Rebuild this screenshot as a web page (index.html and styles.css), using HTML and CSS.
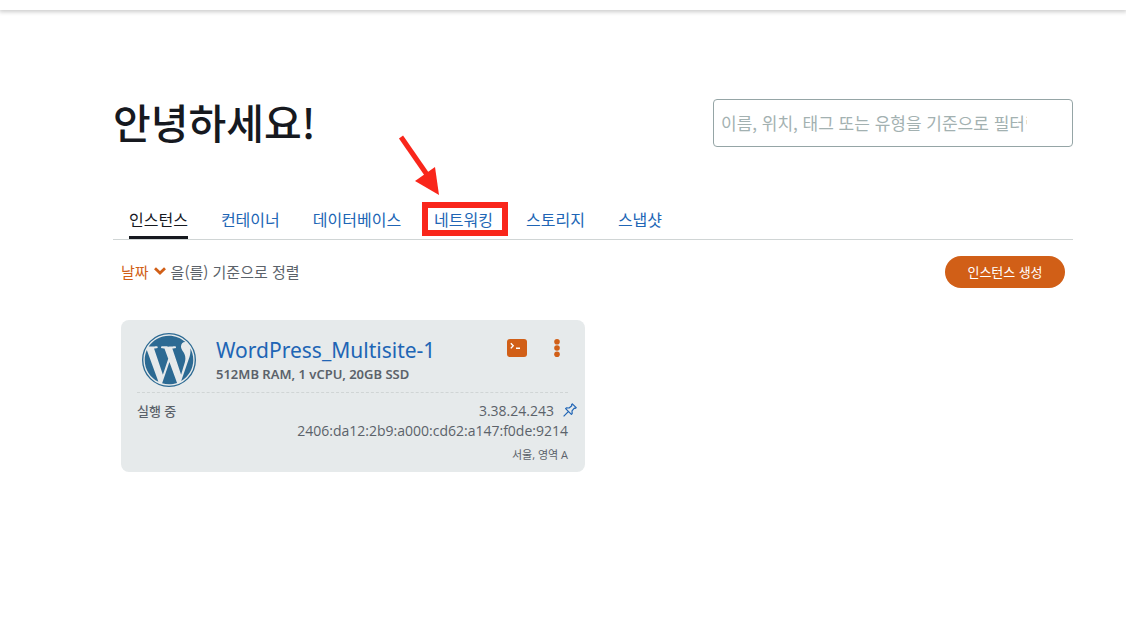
FILE: index.html
```html
<!DOCTYPE html>
<html lang="ko">
<head>
    <meta charset="UTF-8">
    <meta name="viewport" content="width=device-width, initial-scale=1.0">
    <title>Lightsail</title>
    <link rel="stylesheet" href="styles.css">
</head>
<body>
    <header class="topbar"></header>
    <main class="home">
        <div class="welcome">
            <h1>안녕하세요!</h1>
            <input type="text" class="filter" aria-label="필터" placeholder="이름, 위치, 태그 또는 유형을 기준으로 필터링">
        </div>

        <nav class="tabs">
            <a href="#" class="active">인스턴스</a>
            <a href="#">컨테이너</a>
            <a href="#">데이터베이스</a>
            <a href="#" class="marked">네트워킹
                <svg class="arrow" width="44" height="60" viewBox="0 0 44 60" aria-hidden="true">
                    <path d="M3 2L30 41" stroke="#f9261b" stroke-width="5"/>
                    <path d="M17 46L37 32L41 60Z" fill="#f9261b"/>
                </svg>
            </a>
            <a href="#">스토리지</a>
            <a href="#">스냅샷</a>
        </nav>

        <div class="toolbar">
            <div class="sort">
                <button type="button" class="sort-button">날짜
                    <svg width="12" height="8" viewBox="0 0 12 8" aria-hidden="true"><path d="M1 1.3L6 6L11 1.3" fill="none" stroke="#d15f17" stroke-width="2.8"/></svg>
                </button>
                <span>을(를) 기준으로 정렬</span>
            </div>
            <button type="button" class="create">인스턴스 생성</button>
        </div>

        <div class="cards">
            <article class="card">
                <div class="card-head">
                    <svg class="logo" width="54" height="54" viewBox="0 0 24 24" role="img" aria-label="WordPress">
                        <circle cx="12" cy="12" r="11.7" fill="#e6eaeb" stroke="#2c6a93" stroke-width=".6"/>
                        <path fill="#2c6a93" d="M21.469 6.825c.84 1.537 1.318 3.3 1.318 5.175 0 3.979-2.156 7.456-5.363 9.325l3.295-9.527c.615-1.54.82-2.771.82-3.864 0-.405-.026-.78-.07-1.11m-7.981.105c.647-.03 1.232-.105 1.232-.105.582-.075.514-.93-.067-.899 0 0-1.755.135-2.88.135-1.064 0-2.85-.15-2.85-.15-.585-.03-.661.855-.075.885 0 0 .54.061 1.125.09l1.68 4.605-2.37 7.08L5.354 6.9c.649-.03 1.234-.1 1.234-.1.585-.075.516-.93-.065-.896 0 0-1.746.138-2.874.138-.2 0-.438-.008-.69-.015C4.911 3.15 8.235 1.215 12 1.215c2.809 0 5.365 1.072 7.286 2.833-.046-.003-.091-.009-.141-.009-1.06 0-1.812.923-1.812 1.914 0 .89.513 1.643 1.06 2.531.411.72.89 1.643.89 2.977 0 .915-.354 1.994-.821 3.479l-1.075 3.585-3.9-11.61zM12 22.784c-1.059 0-2.081-.153-3.048-.437l3.237-9.406 3.315 9.087c.024.053.05.101.078.149-1.12.393-2.325.609-3.582.609M1.211 12c0-1.564.336-3.05.935-4.39L7.29 21.709C3.694 19.96 1.212 16.271 1.211 12"/>
                    </svg>
                    <div class="title">
                        <a href="#">WordPress_Multisite-1</a>
                        <p>512MB RAM, 1 vCPU, 20GB SSD</p>
                    </div>
                    <div class="actions">
                        <button type="button" aria-label="연결">
                            <svg width="20" height="18" viewBox="0 0 20 18"><rect width="20" height="18" rx="3" fill="#d15f17"/><path d="M3.8 4.2L6.2 6.8L3.8 9.4M9 9.3H13" fill="none" stroke="#fff" stroke-width="1.4"/></svg>
                        </button>
                        <button type="button" aria-label="메뉴">
                            <svg width="6" height="18" viewBox="0 0 6 18" fill="#d15f17"><circle cx="3" cy="2.8" r="2.8"/><circle cx="3" cy="9" r="2.8"/><circle cx="3" cy="15.2" r="2.8"/></svg>
                        </button>
                    </div>
                </div>
                <div class="card-body">
                    <span class="status">실행 중</span>
                    <div class="address">
                        <p>3.38.24.243
                            <svg class="pin" width="14" height="14" viewBox="0 0 14 14" aria-hidden="true"><path d="M9.3 .8L13.2 4.7L12.3 5.4L11.3 5.2L9 7.9L9.2 10.6L8.4 11.4L2.6 5.6L3.4 4.8L6.1 5L8.8 2.7L8.6 1.6ZM5.3 8.7L.6 13.4" fill="none" stroke="#2065b5" stroke-width="1.2" stroke-linejoin="round"/></svg>
                        </p>
                        <p>2406:da12:2b9:a000:cd62:a147:f0de:9214</p>
                        <p class="region">서울, 영역 A</p>
                    </div>
                </div>
            </article>
        </div>
    </main>
</body>
</html>
```
FILE: styles.css
```css
* {
    box-sizing: border-box;
}
body {
    margin: 0;
    background: #fff;
    color: #5b626a;
    font-family: "Open Sans", "Noto Sans CJK KR", sans-serif;
    font-size: 15px;
}
h1, p {
    margin: 0;
    font-weight: normal;
}
a {
    color: #2065b5;
    text-decoration: none;
}
button {
    padding: 0;
    border: none;
    background: none;
    font-family: inherit;
    cursor: pointer;
}
svg {
    display: block;
}
.topbar {
    height: 10px;
    box-shadow: 0 1px 4px 1px rgba(0,0,0,0.2);
}
.home {
    padding: 84px 53px 40px 113px;
}
.welcome {
    display: flex;
    justify-content: space-between;
    align-items: center;
    height: 58px;
}
h1 {
    padding-bottom: 4px;
    color: #16191f;
    font-family: "Noto Sans CJK KR", sans-serif;
    font-size: 41px;
    font-weight: 500;
    line-height: 58px;
}
.filter {
    width: 360px;
    height: 48px;
    padding: 0 45px 2px 7px;
    border: 1px solid #95a5a6;
    border-radius: 4px;
    font-family: "Noto Sans CJK KR", sans-serif;
    font-size: 17px;
}
.filter::placeholder {
    color: #a3b1b1;
    opacity: 1;
}
.tabs {
    display: flex;
    gap: 33px;
    margin-top: 50px;
    padding-left: 16px;
    border-bottom: 1px solid #d0d5d5;
}
.tabs a {
    position: relative;
    height: 37px;
    font-family: "Noto Sans CJK KR", sans-serif;
    font-size: 16px;
    line-height: 34px;
}
.tabs .active {
    color: #16191f;
    border-bottom: 3px solid #16191f;
}
/* red highlight box around the tab */
.marked::before {
    content: "";
    position: absolute;
    inset: 0 -15px 3px -12px;
    border: 6px solid #f9261b;
}
.arrow {
    position: absolute;
    right: 51px;
    bottom: 44px;
}
.toolbar {
    display: flex;
    justify-content: space-between;
    align-items: center;
    margin-top: 16px;
    padding: 0 8px;
}
.sort, .sort-button {
    display: flex;
    align-items: center;
    gap: 5px;
    font-family: "Noto Sans CJK KR", sans-serif;
    font-size: 15px;
}
.sort {
    padding-bottom: 2px;
}
.sort-button {
    color: #d15f17;
}
.create {
    width: 120px;
    height: 32px;
    padding-bottom: 2px;
    border-radius: 16px;
    background: #d15f17;
    color: #fff;
    font-size: 13px;
}
.cards {
    display: grid;
    grid-template-columns: 1fr 1fr;
    gap: 16px;
    margin-top: 32px;
    padding: 0 8px;
}
.card {
    height: 152px;
    padding: 0 17px 0 16px;
    border-radius: 8px;
    background: #e6eaeb;
}
.card-head {
    display: flex;
    height: 73px;
    padding: 13px 8px 0 5px;
    border-bottom: 1px dashed #d0d5d5;
}
.title {
    flex: 1;
    margin-left: 20px;
    padding-top: 4px;
    font-family: "Noto Sans", sans-serif;
}
.title a {
    display: block;
    font-size: 21px;
    line-height: 26px;
}
.title p {
    font-size: 13px;
    font-weight: 600;
    line-height: 22px;
}
.actions {
    display: flex;
    align-items: center;
    gap: 27px;
    height: 30px;
}
.card-body {
    display: flex;
    justify-content: space-between;
    padding-top: 8px;
}
.status {
    font-size: 13px;
    font-weight: 500;
    line-height: 20px;
}
.address {
    font-size: 14px;
    line-height: 20px;
    text-align: right;
}
.address p {
    position: relative;
}
.address p:first-child {
    padding-right: 14px;
}
.pin {
    position: absolute;
    right: -9px;
    top: 2px;
}
.address .region {
    margin-top: 4px;
    font-size: 11px;
}
```
